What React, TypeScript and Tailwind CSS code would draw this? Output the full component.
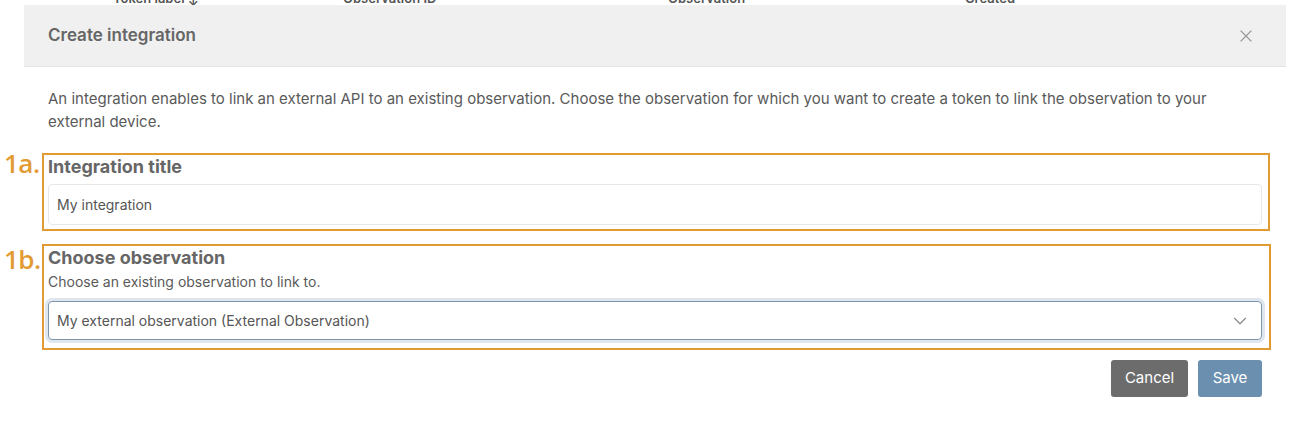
import { X, ChevronDown } from "lucide-react";

const behind = [
  { label: "Token label ↕", left: 113 },
  { label: "Observation ID", left: 343 },
  { label: "Observation", left: 668 },
  { label: "Created", left: 965 },
];

function Marker({ text, top }: { text: string; top: string }) {
  return (
    <span
      className={`absolute -left-[44px] ${top} text-[26px] font-semibold leading-none tracking-[-0.5px] text-[#e29b33] [font-family:'Open_Sans',sans-serif]`}
    >
      {text}
    </span>
  );
}

export default function App() {
  return (
    <div className="w-[1292px] h-[444px] bg-white text-[#585858] [font-family:Inter,'Noto_Sans',sans-serif]">
      <div className="relative h-[5px] overflow-hidden">
        {behind.map((b) => (
          <span
            key={b.label}
            className="absolute -top-[10px] whitespace-nowrap text-[13px] font-semibold leading-[16px] text-[#555]"
            style={{ left: b.left }}
          >
            {b.label}
          </span>
        ))}
      </div>

      <div className="ml-[24px] w-[1262px]">
        <div className="flex h-[62px] items-center justify-between border-b border-[#e4e4e4] bg-[#f0f0f0] pl-[24px] pr-[30px]">
          <h1 className="text-[17px] font-semibold text-[#666]">Create integration</h1>
          <X className="h-[20px] w-[20px] text-[#9a9a9a]" strokeWidth={1.4} />
        </div>

        <div className="px-[24px] pt-[20px]">
          <p className="text-[15px] leading-[23px] text-[#5a5a5a]">
            An integration enables to link an external API to an existing observation. Choose the observation for which you
            want to create a token to link the observation to your external device.
          </p>

          <div className="relative mt-[23px]">
            <div className="pointer-events-none absolute -left-[6px] -right-[8px] -top-[3px] -bottom-[6px] border-2 border-[#e29b33]" />
            <Marker text="1a." top="-top-[6px]" />
            <label className="block text-[18px] font-bold leading-[22px] text-[#666]">Integration title</label>
            <div className="mt-[6px] flex h-[41px] items-center rounded-[4px] border border-[#e5e8eb] px-[8px] text-[14px] text-[#555]">
              My integration
            </div>
          </div>

          <div className="relative mt-[22px]">
            <div className="pointer-events-none absolute -left-[6px] -right-[9px] -top-[3px] -bottom-[10px] border-2 border-[#e29b33]" />
            <Marker text="1b." top="-top-[1px]" />
            <label className="block text-[18px] font-bold leading-[22px] text-[#666]">Choose observation</label>
            <div className="mt-[3px] text-[14px] leading-[20px] text-[#5a5a5a]">Choose an existing observation to link to.</div>
            <div className="mt-[9px] flex h-[39px] items-center justify-between rounded-[4px] border border-[#7d95ad] pl-[8px] pr-[10px] text-[14px] text-[#555] shadow-[0_0_0_3px_#dfe6ee]">
              <span>My external observation (External Observation)</span>
              <ChevronDown className="h-[22px] w-[22px] text-[#8a8a8a]" strokeWidth={1.3} />
            </div>
          </div>

          <div className="mt-[20px] flex justify-end gap-[10px]">
            <button className="h-[37px] w-[77px] rounded-[3px] bg-[#6c6c6c] text-[15px] text-white">Cancel</button>
            <button className="h-[37px] w-[64px] rounded-[3px] bg-[#6b8fae] text-[15px] text-white">Save</button>
          </div>
        </div>
      </div>
    </div>
  );
}
